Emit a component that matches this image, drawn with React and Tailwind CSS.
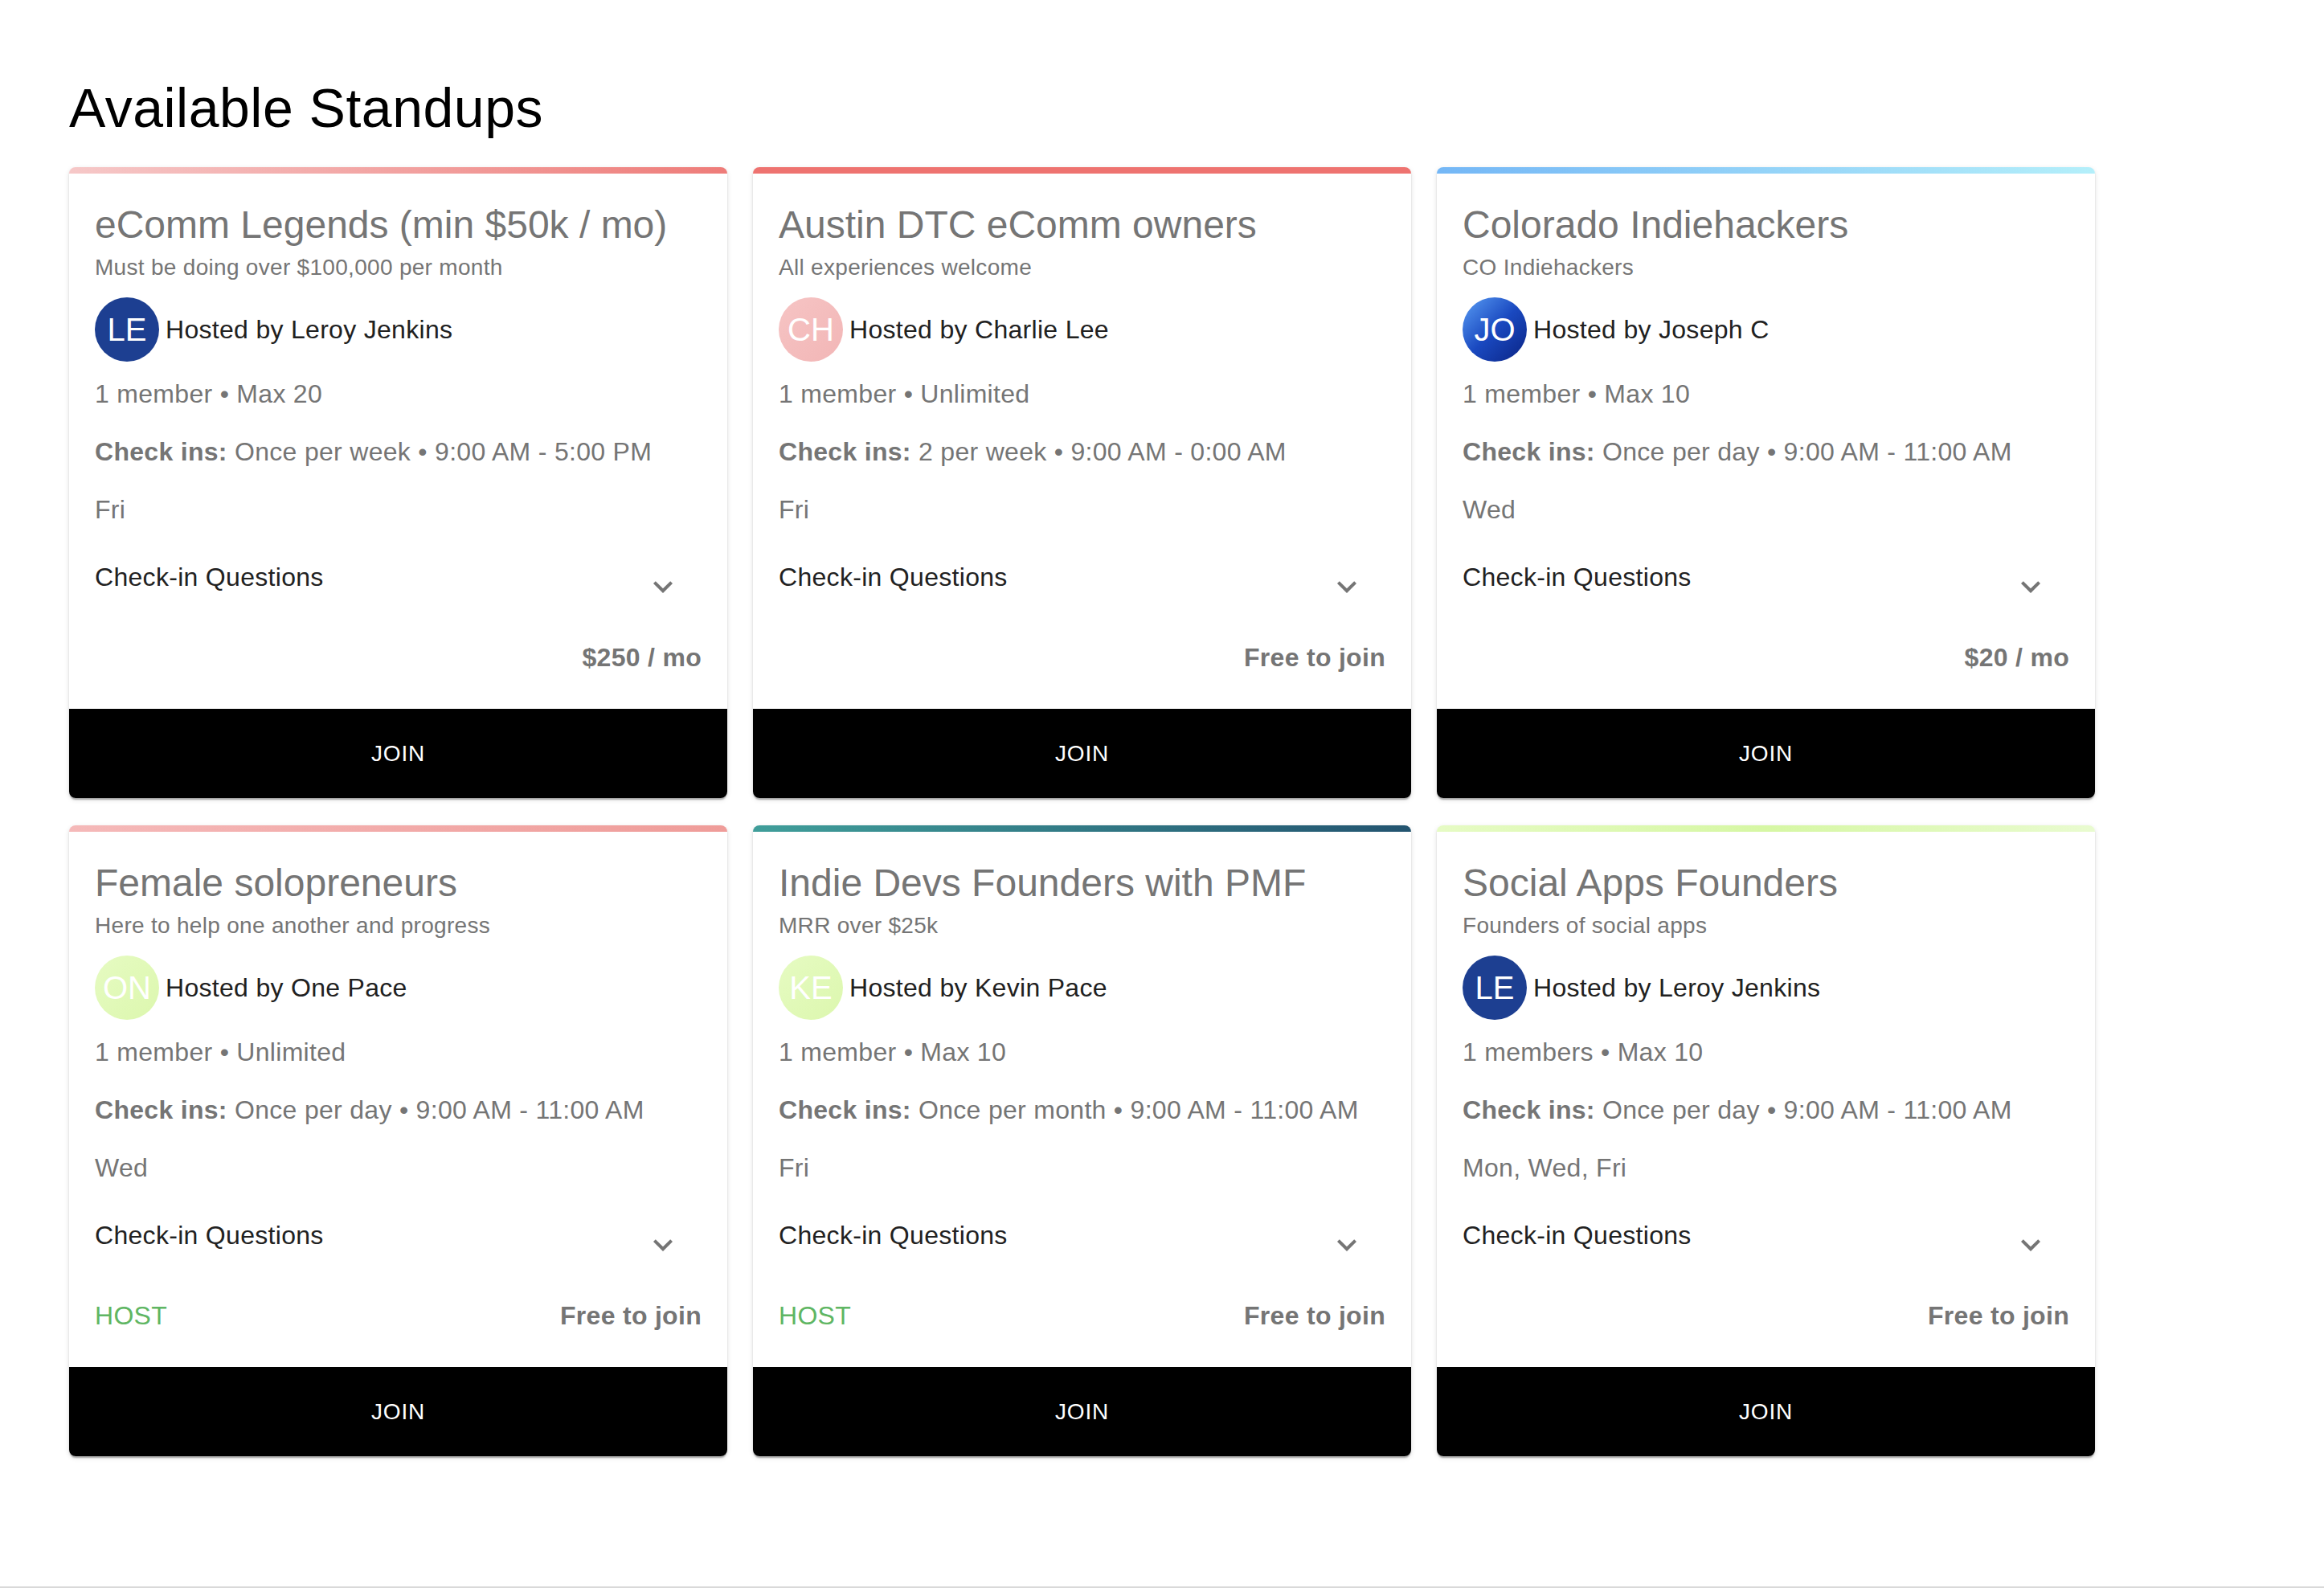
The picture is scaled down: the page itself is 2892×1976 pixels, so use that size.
import React from 'react';

const standups = [
  {
    title: 'eComm Legends (min $50k / mo)',
    subtitle: 'Must be doing over $100,000 per month',
    bar: 'bg-[linear-gradient(to_right,#f6c8c8,#ee7c79)]',
    avatar: 'bg-[#1d3f91]',
    initials: 'LE',
    host: 'Leroy Jenkins',
    members: '1 member • Max 20',
    checkins: 'Once per week • 9:00 AM - 5:00 PM',
    days: 'Fri',
    price: '$250 / mo',
    isHost: false,
  },
  {
    title: 'Austin DTC eComm owners',
    subtitle: 'All experiences welcome',
    bar: 'bg-[#ee7370]',
    avatar: 'bg-[linear-gradient(135deg,#f6c4c4,#f2b6b6)]',
    initials: 'CH',
    host: 'Charlie Lee',
    members: '1 member • Unlimited',
    checkins: '2 per week • 9:00 AM - 0:00 AM',
    days: 'Fri',
    price: 'Free to join',
    isHost: false,
  },
  {
    title: 'Colorado Indiehackers',
    subtitle: 'CO Indiehackers',
    bar: 'bg-[linear-gradient(to_right,#74b7f6,#b4effa)]',
    avatar: 'bg-[linear-gradient(135deg,#5a9ef5,#1a49c0_50%,#0a2383)]',
    initials: 'JO',
    host: 'Joseph C',
    members: '1 member • Max 10',
    checkins: 'Once per day • 9:00 AM - 11:00 AM',
    days: 'Wed',
    price: '$20 / mo',
    isHost: false,
  },
  {
    title: 'Female solopreneurs',
    subtitle: 'Here to help one another and progress',
    bar: 'bg-[linear-gradient(to_right,#f5b9b9,#ef9c99)]',
    avatar: 'bg-[linear-gradient(135deg,#e6fbc2,#dcf7ae)]',
    initials: 'ON',
    host: 'One Pace',
    members: '1 member • Unlimited',
    checkins: 'Once per day • 9:00 AM - 11:00 AM',
    days: 'Wed',
    price: 'Free to join',
    isHost: true,
  },
  {
    title: 'Indie Devs Founders with PMF',
    subtitle: 'MRR over $25k',
    bar: 'bg-[linear-gradient(to_right,#409e9a,#235470)]',
    avatar: 'bg-[linear-gradient(135deg,#e6fbc2,#dcf7ae)]',
    initials: 'KE',
    host: 'Kevin Pace',
    members: '1 member • Max 10',
    checkins: 'Once per month • 9:00 AM - 11:00 AM',
    days: 'Fri',
    price: 'Free to join',
    isHost: true,
  },
  {
    title: 'Social Apps Founders',
    subtitle: 'Founders of social apps',
    bar: 'bg-[linear-gradient(to_right,#e6fbc4,#d6f7a4_50%,#e9fbd0)]',
    avatar: 'bg-[#1d3f91]',
    initials: 'LE',
    host: 'Leroy Jenkins',
    members: '1 members • Max 10',
    checkins: 'Once per day • 9:00 AM - 11:00 AM',
    days: 'Mon, Wed, Fri',
    price: 'Free to join',
    isHost: false,
  },
];

const ExpandMore = () => (
  <svg viewBox="0 0 24 24" className="size-[48px] fill-[#757575]">
    <path d="M16.59 8.59 12 13.17 7.41 8.59 6 10l6 6 6-6z" />
  </svg>
);

const StandupCard = ({ s }) => (
  <div className="flex flex-col overflow-hidden rounded-[8px] bg-white shadow-[0_4px_2px_-2px_rgba(0,0,0,0.2),0_2px_2px_0_rgba(0,0,0,0.14),0_2px_6px_0_rgba(0,0,0,0.12)]">
    <div className={`h-[8px] ${s.bar}`} />
    <div className="px-[32px] pt-[32px] tracking-[0.3px]">
      <h2 className="text-[48px] leading-[64px] tracking-normal text-[#757575] whitespace-nowrap">{s.title}</h2>
      <p className="mt-[1px] text-[28px] leading-[40px] text-[#757575]">{s.subtitle}</p>

      <div className="mt-[17px] flex h-[80px] items-center gap-[8px]">
        <div className={`flex size-[80px] items-center justify-center rounded-full text-[40px] tracking-normal text-white ${s.avatar}`}>
          {s.initials}
        </div>
        <span className="text-[32px] text-[#212121]">Hosted by {s.host}</span>
      </div>

      <p className="mt-[16px] text-[32px] leading-[48px] text-[#757575]">{s.members}</p>
      <p className="mt-[24px] text-[32px] leading-[48px] text-[#757575]">
        <span className="font-bold">Check ins:</span> {s.checkins}
      </p>
      <p className="mt-[24px] text-[32px] leading-[48px] text-[#757575]">{s.days}</p>

      <div className="mt-[12px] flex h-[96px] justify-between">
        <span className="pt-[24px] text-[32px] leading-[48px] text-[#212121]">Check-in Questions</span>
        <div className="mr-[24px] mt-[36px] h-[48px]">
          <ExpandMore />
        </div>
      </div>

      <div className="mt-[28px] flex justify-between text-[32px] leading-[48px]">
        <span className="text-[#5fb663]">{s.isHost ? 'HOST' : ''}</span>
        <span className="font-bold text-[#757575]">{s.price}</span>
      </div>
    </div>
    <button className="mt-[40px] h-[111px] w-full bg-black text-[28px] tracking-[0.8px] text-white">
      JOIN
    </button>
  </div>
);

export default function App() {
  return (
    <div className="min-h-screen border-b-2 border-[#d9d9d9] bg-white font-['Liberation_Sans',Arial,sans-serif]">
      <div className="pl-[86px] pt-[92px]">
        <h1 className="text-[68px] leading-[84px] tracking-[0.5px] text-black">Available Standups</h1>
        <div className="mt-[32px] grid grid-cols-[repeat(3,819px)] gap-x-[32px] gap-y-[34px]">
          {standups.map((s, i) => (
            <StandupCard key={i} s={s} />
          ))}
        </div>
      </div>
    </div>
  );
}
